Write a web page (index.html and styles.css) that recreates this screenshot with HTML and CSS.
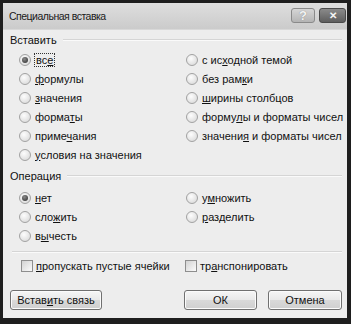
FILE: index.html
```html
<!DOCTYPE html>
<html lang="ru">
<head>
    <meta charset="UTF-8">
    <title>Специальная вставка</title>
    <link rel="stylesheet" href="styles.css">
</head>
<body>
    <div class="window">
        <!-- Title bar -->
        <div class="titlebar">
            <span class="title">Специальная вставка</span>
            <div class="title-buttons">
                <span class="tbtn help">?</span>
                <span class="tbtn close">&#x2715;</span>
            </div>
        </div>

        <div class="content">
            <!-- Paste group -->
            <div class="group-head"><span>Вставить</span><i></i></div>
            <div class="options paste">
                <div class="opt"><span class="radio on"></span><span class="label focus">вс<u>е</u></span></div>
                <div class="opt"><span class="radio"></span><span class="label">с ис<u>х</u>одной темой</span></div>
                <div class="opt"><span class="radio"></span><span class="label"><u>ф</u>ормулы</span></div>
                <div class="opt"><span class="radio"></span><span class="label">без рам<u>к</u>и</span></div>
                <div class="opt"><span class="radio"></span><span class="label"><u>з</u>начения</span></div>
                <div class="opt"><span class="radio"></span><span class="label"><u>ш</u>ирины столбцов</span></div>
                <div class="opt"><span class="radio"></span><span class="label">форма<u>т</u>ы</span></div>
                <div class="opt"><span class="radio"></span><span class="label">форму<u>л</u>ы и форматы чисел</span></div>
                <div class="opt"><span class="radio"></span><span class="label">приме<u>ч</u>ания</span></div>
                <div class="opt"><span class="radio"></span><span class="label">значени<u>я</u> и форматы чисел</span></div>
                <div class="opt"><span class="radio"></span><span class="label"><u>у</u>словия на значения</span></div>
            </div>

            <!-- Operation group -->
            <div class="group-head op"><span>Операция</span><i></i></div>
            <div class="options ops">
                <div class="opt"><span class="radio on"></span><span class="label"><u>н</u>ет</span></div>
                <div class="opt"><span class="radio"></span><span class="label">у<u>м</u>ножить</span></div>
                <div class="opt"><span class="radio"></span><span class="label">сло<u>ж</u>ить</span></div>
                <div class="opt"><span class="radio"></span><span class="label"><u>р</u>азделить</span></div>
                <div class="opt"><span class="radio"></span><span class="label">в<u>ы</u>честь</span></div>
            </div>

            <div class="separator"></div>

            <div class="options checks">
                <div class="opt"><span class="check"></span><span class="label"><u>п</u>ропускать пустые ячейки</span></div>
                <div class="opt"><span class="check"></span><span class="label">тр<u>а</u>нспонировать</span></div>
            </div>

            <div class="buttons">
                <button class="btn link">Встав<u>и</u>ть связь</button>
                <div class="right-buttons">
                    <button class="btn ok">ОК</button>
                    <button class="btn">Отмена</button>
                </div>
            </div>
        </div>
    </div>
</body>
</html>
```

FILE: styles.css
```css
* {
    margin: 0;
    padding: 0;
    box-sizing: border-box;
}

body {
    font-family: "Liberation Sans", Arial, sans-serif;
    font-size: 11px;
    color: #111;
    background-color: #1c1c1c;
}

.window {
    width: 351px;
    height: 324px;
    border-style: solid;
    border-color: #1e1e1e;
    border-width: 3px 4px 6px 3px;
    display: flex;
    flex-direction: column;
}

.titlebar {
    height: 27px;
    background: linear-gradient(#dedede, #cbcbcb);
    display: flex;
    align-items: center;
    justify-content: space-between;
    padding: 0 1px 0 6px;
    border-bottom: 1px solid #d8d8d8;
}

.title {
    font-size: 10.5px;
    letter-spacing: -0.5px;
    color: #1a1a1a;
}

.title-buttons {
    display: flex;
    gap: 4px;
    align-self: flex-start;
    margin-top: 5px;
}

.tbtn {
    height: 15px;
    border: 1px solid #8a8a8a;
    border-radius: 3px;
    display: flex;
    align-items: center;
    justify-content: center;
    font-weight: bold;
    color: #f4f4f4;
}

.help {
    width: 24px;
    background: linear-gradient(#d6d6d6, #b4b4b4);
    font-size: 13px;
    text-shadow: 0 0 1px #777;
}

.close {
    width: 27px;
    background: linear-gradient(#8a8a8a, #5e5e5e);
    border-color: #4a4a4a;
    font-size: 10px;
}

.content {
    flex-grow: 1;
    background-color: #ededed;
    padding: 2px 5px 8px 7px;
    display: flex;
    flex-direction: column;
}

.group-head {
    height: 16px;
    display: flex;
    align-items: center;
    gap: 6px;
}

.group-head i {
    flex-grow: 1;
    height: 2px;
    border-top: 1px solid #d5d5d5;
    border-bottom: 1px solid #fafafa;
}

.group-head.op {
    margin-top: 4px;
}

.options {
    display: grid;
    grid-template-columns: 167px 1fr;
    padding-left: 9px;
}

.paste {
    margin-top: 2px;
}

.ops {
    margin-top: 4px;
}

.opt {
    height: 19px;
    display: flex;
    align-items: center;
    white-space: nowrap;
}

.radio {
    flex-shrink: 0;
    width: 12px;
    height: 12px;
    border-radius: 50%;
    border: 1px solid #a2a2a2;
    background: radial-gradient(circle at 40% 35%, #fdfdfd, #d4d4d4);
    margin-right: 4px;
    display: flex;
    align-items: center;
    justify-content: center;
}

.radio.on::after {
    content: "";
    width: 6px;
    height: 6px;
    border-radius: 50%;
    background: radial-gradient(circle at 40% 35%, #8a8a8a, #2a2a2a);
}

.focus {
    outline: 1px dotted #333;
    padding: 0 1px;
}

.separator {
    margin-top: 6px;
    height: 2px;
    border-top: 1px solid #d5d5d5;
    border-bottom: 1px solid #fafafa;
    margin-left: 2px;
}

.checks {
    margin-top: 4px;
    padding-left: 11px;
    grid-template-columns: 164px 1fr;
}

.checks .opt {
    height: 18px;
}

.check {
    flex-shrink: 0;
    width: 12px;
    height: 12px;
    border: 1px solid #8e8e8e;
    background: linear-gradient(135deg, #d2d2d2, #fbfbfb);
    margin-right: 3px;
}

.buttons {
    margin-top: 15px;
    display: flex;
    justify-content: space-between;
}

.right-buttons {
    display: flex;
    gap: 11px;
}

.btn {
    height: 20px;
    font-family: inherit;
    font-size: 11px;
    color: #111;
    border: 1px solid #707070;
    border-radius: 3px;
    background: linear-gradient(#f6f6f6 0%, #e8e8e8 50%, #d9d9d9 51%, #cfcfcf 100%);
    box-shadow: inset 0 0 0 1px #fbfbfb;
    width: 74px;
}

.btn.ok {
    width: 73px;
}

.btn.link {
    width: 92px;
}
```
